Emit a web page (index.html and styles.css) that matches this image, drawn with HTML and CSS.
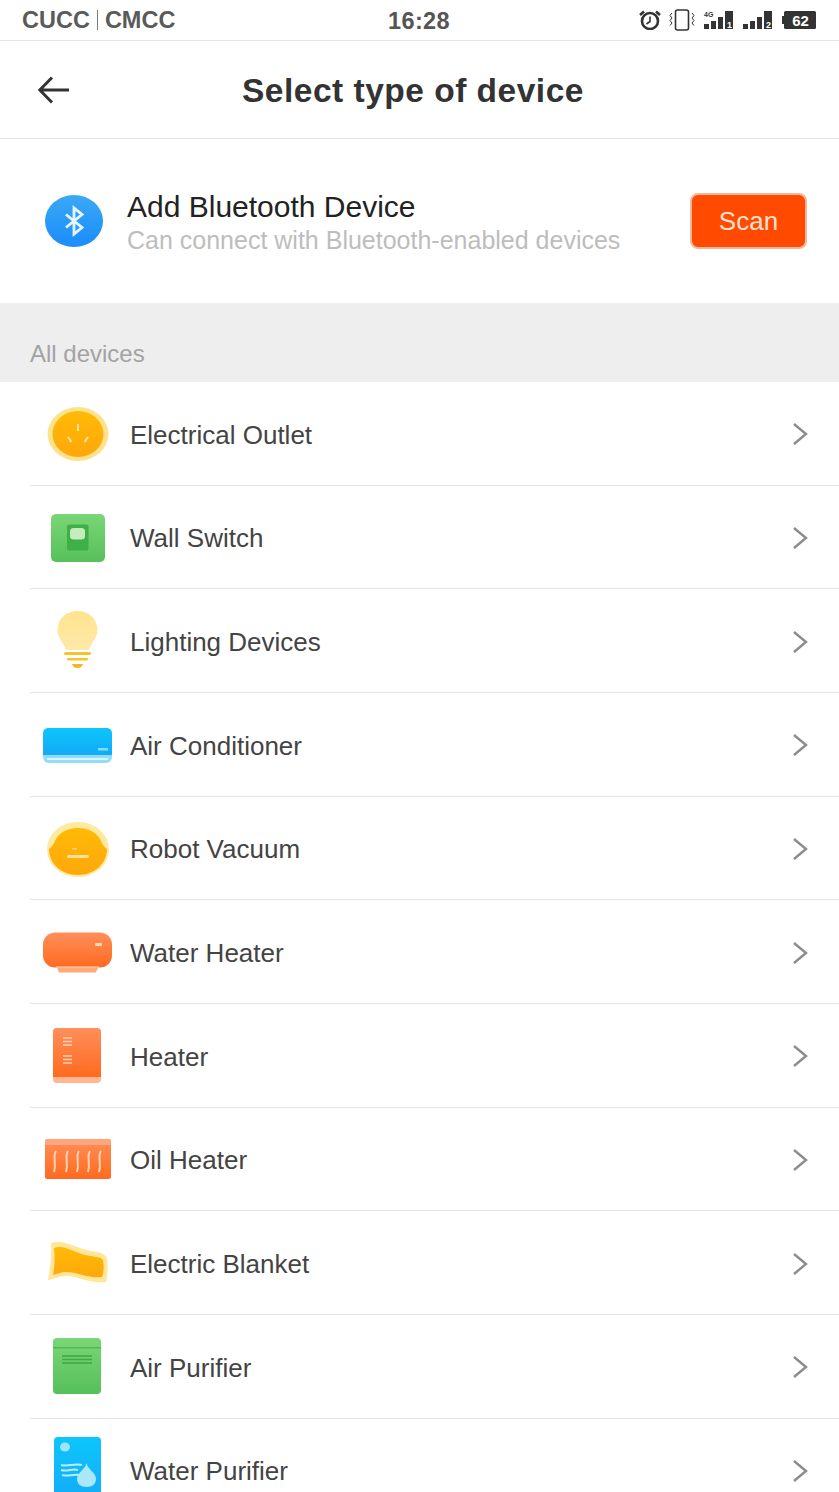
FILE: index.html
```html
<!DOCTYPE html>
<html lang="en">
<head>
    <meta charset="UTF-8">
    <meta name="viewport" content="width=device-width, initial-scale=1.0">
    <title>Select type of device</title>
    <link rel="stylesheet" href="styles.css">
</head>
<body>

    <svg class="defs" aria-hidden="true">
        <defs>
            <linearGradient id="gradYellow" x1="0" y1="0" x2="0" y2="1"><stop offset="0" stop-color="#ffba05"/><stop offset="1" stop-color="#ffa70c"/></linearGradient>
            <linearGradient id="gradGreen" x1="0" y1="0" x2="0" y2="1"><stop offset="0" stop-color="#7ad676"/><stop offset="1" stop-color="#56c05a"/></linearGradient>
            <linearGradient id="gradBlue" x1="0" y1="0" x2="0" y2="1"><stop offset="0" stop-color="#0cc6fb"/><stop offset="1" stop-color="#14a9f6"/></linearGradient>
            <linearGradient id="gradOrange" x1="0" y1="0" x2="0" y2="1"><stop offset="0" stop-color="#ff8f5a"/><stop offset="1" stop-color="#ff6a1f"/></linearGradient>
            <linearGradient id="gradBulb" x1="0" y1="0" x2="0" y2="1"><stop offset="0" stop-color="#ffe48f"/><stop offset="1" stop-color="#ffe9a8"/></linearGradient>
            <linearGradient id="gradBt" x1="0" y1="0" x2="0" y2="1"><stop offset="0" stop-color="#3aa9f5"/><stop offset="1" stop-color="#1b8cfb"/></linearGradient>
        </defs>
    </svg>

    <div class="status-bar">
        <div class="carriers">
            <span>CUCC</span>
            <span class="carrier-line"></span>
            <span>CMCC</span>
        </div>
        <div class="clock">16:28</div>
        <div class="status-icons">
            <svg width="22" height="20" viewBox="0 0 22 20">
                <circle cx="11" cy="11" r="8" fill="none" stroke="#333" stroke-width="2.6"/>
                <path d="M11 6.5V11.5L7.5 14" fill="none" stroke="#333" stroke-width="1.6"/>
                <path d="M1 5L5 1.5M21 5L17 1.5" stroke="#333" stroke-width="2.6"/>
            </svg>
            <svg width="26" height="22" viewBox="0 0 26 22">
                <rect x="6.5" y="1" width="13" height="20" rx="2" fill="none" stroke="#333" stroke-width="1.6"/>
                <path d="M3 4L1 6.5L3 9L1 11.5L3 14L1 16.5M23 4L25 6.5L23 9L25 11.5L23 14L25 16.5" fill="none" stroke="#333" stroke-width="1"/>
            </svg>
            <svg width="31" height="20" viewBox="0 0 31 20">
                <text x="1" y="7" class="net-label">4G</text>
                <rect x="1" y="14" width="5" height="5" fill="#333"/>
                <rect x="8" y="11" width="5" height="8" fill="#333"/>
                <rect x="15" y="7" width="5" height="12" fill="#333"/>
                <rect x="22" y="1" width="8" height="18" fill="#333"/>
                <text x="24" y="18" class="sim-label">1</text>
            </svg>
            <svg width="31" height="20" viewBox="0 0 31 20">
                <rect x="1" y="14" width="5" height="5" fill="#333"/>
                <rect x="8" y="11" width="5" height="8" fill="#333"/>
                <rect x="15" y="7" width="5" height="12" fill="#333"/>
                <rect x="22" y="1" width="8" height="18" fill="#333"/>
                <text x="24" y="18" class="sim-label">2</text>
            </svg>
            <svg class="battery" width="34" height="18" viewBox="0 0 34 18">
                <rect x="0" y="5" width="3" height="8" fill="#333"/>
                <rect x="2" y="0" width="32" height="18" rx="1.5" fill="#333"/>
                <text x="18.5" y="14.5" class="battery-label">62</text>
            </svg>
        </div>
    </div>

    <div class="top-bar">
        <svg class="back" width="32" height="28" viewBox="0 0 32 28">
            <path d="M31 14H2M14 1.5L1.8 14L14 26.5" fill="none" stroke="#333" stroke-width="3"/>
        </svg>
        <h1>Select type of device</h1>
    </div>

    <div class="bluetooth">
        <svg class="bt-icon" width="58" height="52" viewBox="0 0 58 52">
            <ellipse cx="29" cy="26" rx="29" ry="26" fill="url(#gradBt)"/>
            <path d="M21 19.500L37 32.500L29 39V13L37 19.500L21 32.500" fill="none" stroke="#e8f5ff" stroke-width="2.800"/>
        </svg>
        <div class="bt-text">
            <div class="bt-title">Add Bluetooth Device</div>
            <div class="bt-sub">Can connect with Bluetooth-enabled devices</div>
        </div>
        <button class="scan">Scan</button>
    </div>

    <div class="section-title">All devices</div>

    <div class="device-list">
        <div class="device">
            <svg class="device-icon" viewBox="0 0 100 70">
                <ellipse cx="48" cy="35" rx="30.5" ry="27" fill="#ffe38c"/>
                <ellipse cx="48" cy="35" rx="25.500" ry="23" fill="url(#gradYellow)"/>
                <path d="M48 25V32M38 38L41.500 43M58 38L54.500 43" stroke="#ffe6a0" stroke-width="2"/>
            </svg>
            <span class="device-name">Electrical Outlet</span>
            <svg class="chevron" width="16" height="24" viewBox="0 0 16 24"><path d="M2 2L14 12L2 22" fill="none" stroke="#8c8c8c" stroke-width="2.4"/></svg>
        </div>
        <div class="device">
            <svg class="device-icon" viewBox="0 0 100 70">
                <rect x="21" y="11" width="54" height="48" rx="5" fill="url(#gradGreen)"/>
                <rect x="37" y="21.5" width="21.5" height="26" rx="2" fill="#3fb045"/>
                <rect x="40" y="25" width="15" height="11.5" rx="3.5" fill="#c4edbd"/>
            </svg>
            <span class="device-name">Wall Switch</span>
            <svg class="chevron" width="16" height="24" viewBox="0 0 16 24"><path d="M2 2L14 12L2 22" fill="none" stroke="#8c8c8c" stroke-width="2.4"/></svg>
        </div>
        <div class="device">
            <svg class="device-icon" viewBox="0 0 100 70">
                <path d="M47.5 4C36 4 27.5 12 27.5 23C27.500 31 33 34 36 43H59C62 34 67.500 31 67.500 23C67.500 12 59 4 47.500 4Z" fill="url(#gradBulb)"/>
                <rect x="34" y="45" width="27" height="3" rx="1.500" fill="#f8c22c"/>
                <rect x="37" y="51" width="21" height="2.500" rx="1.200" fill="#f8c22c"/>
                <path d="M42 57H53C52 60 50 61 47.500 61C45 61 43 60 42 57Z" fill="#f5b520"/>
            </svg>
            <span class="device-name">Lighting Devices</span>
            <svg class="chevron" width="16" height="24" viewBox="0 0 16 24"><path d="M2 2L14 12L2 22" fill="none" stroke="#8c8c8c" stroke-width="2.4"/></svg>
        </div>
        <div class="device">
            <svg class="device-icon" viewBox="0 0 100 70">
                <rect x="13" y="18" width="69" height="35" rx="6" fill="#8fdcfb"/>
                <path d="M13 24C13 20 15 18 19 18H76C80 18 82 20 82 24V45H13Z" fill="url(#gradBlue)"/>
                <rect x="17" y="48" width="61" height="2" fill="#d6f3fe"/>
                <rect x="68" y="38" width="10" height="2.500" fill="#7fdcfa"/>
            </svg>
            <span class="device-name">Air Conditioner</span>
            <svg class="chevron" width="16" height="24" viewBox="0 0 16 24"><path d="M2 2L14 12L2 22" fill="none" stroke="#8c8c8c" stroke-width="2.4"/></svg>
        </div>
        <div class="device">
            <svg class="device-icon" viewBox="0 0 100 70">
                <ellipse cx="48" cy="35.500" rx="31" ry="27.500" fill="#ffe99f"/>
                <path d="M19 35C22 33 23 31 25 27C29 18 38 14 48 14C58 14 67 18 71 27C73 31 74 33 77 35C77 50 64 61 48 61C32 61 19 50 19 35Z" fill="url(#gradYellow)"/>
                <rect x="37" y="41" width="22" height="3" rx="1.500" fill="#ffe39a"/>
                <rect x="42" y="34" width="5" height="1.500" fill="#f9d27a"/>
            </svg>
            <span class="device-name">Robot Vacuum</span>
            <svg class="chevron" width="16" height="24" viewBox="0 0 16 24"><path d="M2 2L14 12L2 22" fill="none" stroke="#8c8c8c" stroke-width="2.4"/></svg>
        </div>
        <div class="device">
            <svg class="device-icon" viewBox="0 0 100 70">
                <path d="M26 47H69L66 54.500H29Z" fill="#ffa87a"/>
                <rect x="13" y="14.500" width="69" height="35" rx="12" fill="url(#gradOrange)"/>
                <rect x="26" y="48.500" width="43" height="1.200" fill="#ffd9c2"/>
                <rect x="65" y="25" width="7" height="3" rx="1" fill="#ffd5bd"/>
            </svg>
            <span class="device-name">Water Heater</span>
            <svg class="chevron" width="16" height="24" viewBox="0 0 16 24"><path d="M2 2L14 12L2 22" fill="none" stroke="#8c8c8c" stroke-width="2.4"/></svg>
        </div>
        <div class="device">
            <svg class="device-icon" viewBox="0 0 100 70">
                <rect x="23" y="7" width="48" height="55" rx="4" fill="#ffb792"/>
                <path d="M23 11C23 8.500 25 7 27 7H67C69 7 71 8.500 71 11V56H23Z" fill="url(#gradOrange)"/>
                <path d="M33 17H42M33 20.500H42M33 24H42M33 35H42M33 38.500H42M33 42H42" stroke="#ffd0b4" stroke-width="1.500"/>
            </svg>
            <span class="device-name">Heater</span>
            <svg class="chevron" width="16" height="24" viewBox="0 0 16 24"><path d="M2 2L14 12L2 22" fill="none" stroke="#8c8c8c" stroke-width="2.4"/></svg>
        </div>
        <div class="device">
            <svg class="device-icon" viewBox="0 0 100 70">
                <rect x="15" y="14" width="66" height="40" rx="2.500" fill="url(#gradOrange)"/>
                <path d="M17 14H79C80 14 81 15 81 16V20H15V16C15 15 16 14 17 14Z" fill="#ffa67c"/>
                <path d="M26 26C22 32 27 37 24 47M38 26C34 32 39 37 36 47M49 26C45 32 50 37 47 47M60 26C56 32 61 37 58 47M71 26C67 32 72 37 69 47" fill="none" stroke="#ffd2b0" stroke-width="2"/>
            </svg>
            <span class="device-name">Oil Heater</span>
            <svg class="chevron" width="16" height="24" viewBox="0 0 16 24"><path d="M2 2L14 12L2 22" fill="none" stroke="#8c8c8c" stroke-width="2.4"/></svg>
        </div>
        <div class="device">
            <svg class="device-icon" viewBox="0 0 100 70">
                <path d="M21 14C36 10 46 20 61 22C68 23 75 24 77 29C78 37 78 45 76 53C60 55 48 47 36 47C30 47 24 50 18 51C20 38 22 27 21 14Z" fill="#ffe699"/>
                <path d="M24 19C36 15 44 25 60 27C66 28 71 28 73 31C74 37 74 43 72 48C60 50 48 43 36 43C31 43 27 45 23 46C25 36 25 27 24 19Z" fill="url(#gradYellow)"/>
            </svg>
            <span class="device-name">Electric Blanket</span>
            <svg class="chevron" width="16" height="24" viewBox="0 0 16 24"><path d="M2 2L14 12L2 22" fill="none" stroke="#8c8c8c" stroke-width="2.4"/></svg>
        </div>
        <div class="device">
            <svg class="device-icon" viewBox="0 0 100 70">
                <rect x="23" y="6" width="48" height="56" rx="4" fill="url(#gradGreen)"/>
                <rect x="23" y="15" width="48" height="1.500" fill="#52b556"/>
                <path d="M32 24H62M32 27.500H62M32 31H62" stroke="#3fa744" stroke-width="1.500"/>
            </svg>
            <span class="device-name">Air Purifier</span>
            <svg class="chevron" width="16" height="24" viewBox="0 0 16 24"><path d="M2 2L14 12L2 22" fill="none" stroke="#8c8c8c" stroke-width="2.4"/></svg>
        </div>
        <div class="device">
            <svg class="device-icon" viewBox="0 0 100 70">
                <rect x="24" y="1" width="47" height="69" rx="4" fill="url(#gradBlue)"/>
                <ellipse cx="35" cy="11" rx="5" ry="4.500" fill="#9fe4fb"/>
                <path d="M31 29C38 31 44 27 52 29M31 34C38 36 42 32 48 34M32 39C38 41 42 38 49 39" fill="none" stroke="#b6ecfc" stroke-width="2"/>
                <path d="M56.500 27C57 33 66 36 66 43C66 48 62 51 56.500 51C51 51 47 48 47 43C47 36 56 33 56.500 27Z" fill="#a9e7fb"/>
            </svg>
            <span class="device-name">Water Purifier</span>
            <svg class="chevron" width="16" height="24" viewBox="0 0 16 24"><path d="M2 2L14 12L2 22" fill="none" stroke="#8c8c8c" stroke-width="2.4"/></svg>
        </div>
    </div>

</body>
</html>
```

FILE: styles.css
```css
html, body {
    height: 100%;
    overflow: hidden;
}
body {
    margin: 0;
    background: #fff;
    font-family: "Liberation Sans", Arial, sans-serif;
    color: #333;
}
.defs {
    display: block;
    width: 0;
    height: 0;
}

/* status bar */
.status-bar {
    height: 41px;
    box-sizing: border-box;
    border-bottom: 1px solid #e6e6e6;
    display: grid;
    grid-template-columns: 1fr auto 1fr;
    align-items: center;
    padding: 0 23px 0 22px;
    color: #555;
}
.carriers {
    display: flex;
    align-items: center;
    gap: 7px;
    font-size: 23.5px;
    font-weight: bold;
    color: #5a5a5a;
}
.carrier-line {
    width: 1px;
    height: 20px;
    background: #777;
}
.clock {
    font-size: 23.5px;
    font-weight: bold;
    letter-spacing: 0.4px;
    padding-top: 2px;
}
.status-icons {
    display: flex;
    align-items: center;
    justify-content: flex-end;
    gap: 8px;
}
.battery {
    margin-left: 1px;
}
.net-label {
    font-size: 7px;
    font-weight: bold;
    fill: #333;
}
.sim-label {
    font-size: 9px;
    font-weight: bold;
    fill: #fff;
}
.battery-label {
    font-size: 15px;
    font-weight: bold;
    fill: #fff;
    text-anchor: middle;
}

/* top bar */
.top-bar {
    height: 98px;
    box-sizing: border-box;
    border-bottom: 1px solid #e6e6e6;
    display: flex;
    align-items: center;
    padding-left: 38px;
}
.top-bar h1 {
    margin: 2px 0 0 172px;
    font-size: 33.5px;
    font-weight: bold;
    letter-spacing: 0.5px;
    color: #333;
}

/* bluetooth */
.bluetooth {
    height: 164px;
    display: flex;
    align-items: center;
    padding: 0 32px 0 45px;
}
.bt-icon {
    flex: none;
}
.bt-text {
    flex: 1;
    margin: 5px 0 0 24px;
}
.bt-title {
    font-size: 30px;
    color: #222;
    line-height: 34px;
}
.bt-sub {
    font-size: 25px;
    color: #bdbdbd;
    line-height: 33px;
}
.scan {
    width: 117px;
    height: 56px;
    border: 2px solid #f2b79c;
    border-radius: 8px;
    background: #ff4a00;
    color: #ffe3cf;
    font-family: inherit;
    font-size: 26px;
}

/* list */
.section-title {
    height: 79px;
    box-sizing: border-box;
    background: #eeeeee;
    padding: 37px 0 0 30px;
    font-size: 24px;
    line-height: 28px;
    color: #a3a3a3;
}
.device {
    height: 103.67px;
    box-sizing: border-box;
    margin-left: 30px;
    padding-top: 2px;
    border-bottom: 1px solid #e6e6e6;
    display: flex;
    align-items: center;
}
.device-icon {
    width: 100px;
    height: 70px;
    flex: none;
}
.device-name {
    flex: 1;
    margin-top: 2px;
    font-size: 26px;
    color: #444;
}
.chevron {
    margin-right: 31px;
}
```
